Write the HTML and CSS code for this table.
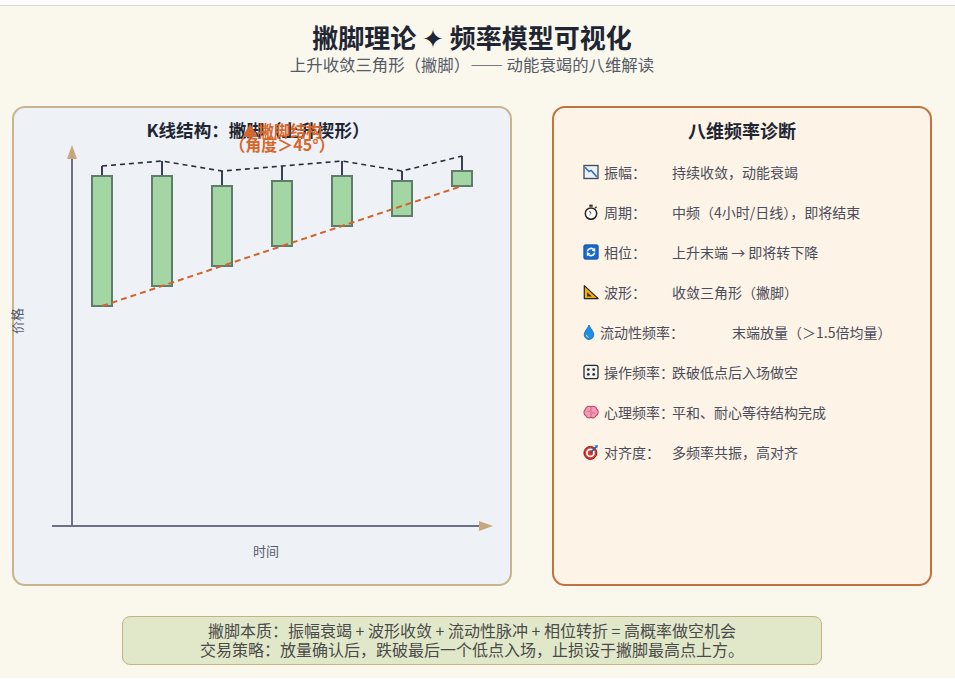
FILE: index.html
```html
<!DOCTYPE html>
<html lang="zh-CN">
<head>
<meta charset="utf-8">
<title>撇脚理论 ✦ 频率模型可视化</title>
<link rel="stylesheet" href="styles.css">
</head>
<body>
<div class="page">
  <header class="header">
    <h1 class="title">撇脚理论 ✦ 频率模型可视化</h1>
    <p class="subtitle">上升收敛三角形（撇脚）—— 动能衰竭的八维解读</p>
  </header>

  <main class="panels">
    <section class="panel panel--chart">
      <svg class="chart" width="496" height="476" viewBox="0 0 496 476">
        <!-- axes -->
        <line class="axis" x1="58" y1="418" x2="58" y2="50"/>
        <polygon class="arrow" points="58,37 53,51 63,51"/>
        <line class="axis" x1="38" y1="418" x2="466" y2="418"/>
        <polygon class="arrow" points="479,418 465,413 465,423"/>

        <!-- wicks -->
        <line class="wick" x1="88" y1="58" x2="88" y2="68"/>
        <line class="wick" x1="148" y1="53" x2="148" y2="68"/>
        <line class="wick" x1="208" y1="63" x2="208" y2="78"/>
        <line class="wick" x1="268" y1="58" x2="268" y2="73"/>
        <line class="wick" x1="328" y1="53" x2="328" y2="68"/>
        <line class="wick" x1="388" y1="63" x2="388" y2="73"/>
        <line class="wick" x1="448" y1="48" x2="448" y2="63"/>

        <!-- bodies -->
        <rect class="body" x="78" y="68" width="20" height="130"/>
        <rect class="body" x="138" y="68" width="20" height="110"/>
        <rect class="body" x="198" y="78" width="20" height="80"/>
        <rect class="body" x="258" y="73" width="20" height="65"/>
        <rect class="body" x="318" y="68" width="20" height="50"/>
        <rect class="body" x="378" y="73" width="20" height="35"/>
        <rect class="body" x="438" y="63" width="20" height="15"/>

        <!-- trend lines -->
        <polyline class="trend-top" points="88,58 148,53 208,63 268,58 328,53 388,63 448,48"/>
        <line class="trend-bottom" x1="88" y1="198" x2="448" y2="78"/>

        <!-- texts -->
        <text class="chart-title" x="244" y="29">K线结构：撇脚（上升楔形）</text>
        <text class="chart-note" x="268" y="29">▲撇脚结构</text>
        <text class="chart-note" x="268" y="43">（角度＞45°）</text>
        <text class="axis-label" x="252" y="448">时间</text>
        <text class="axis-label" x="0" y="0" transform="translate(8 213) rotate(-90)">价格</text>
      </svg>
    </section>

    <section class="panel panel--diag">
      <h2 class="diag-title">八维频率诊断</h2>
      <ul class="diag-list">
        <li class="diag-row">
          <span class="diag-label">
            <svg class="ico" viewBox="0 0 16 16"><rect x="1" y="1.5" width="14" height="13" fill="#e9f1fa" stroke="#3f4a58" stroke-width="1.3"/><polyline points="2,3.2 6,7.5 8.2,6.4 14,13" fill="none" stroke="#2f6fc0" stroke-width="1.6"/></svg>振幅：</span>
          <span class="diag-value">持续收敛，动能衰竭</span>
        </li>
        <li class="diag-row">
          <span class="diag-label">
            <svg class="ico" viewBox="0 0 16 16"><rect x="6.3" y="0.6" width="3.4" height="2.2" fill="#333"/><line x1="12" y1="4.3" x2="13.6" y2="2.8" stroke="#333" stroke-width="1.4"/><circle cx="8" cy="9.6" r="5.7" fill="#fff" stroke="#222" stroke-width="1.5"/><line x1="8" y1="9.6" x2="6.5" y2="7" stroke="#444" stroke-width="1.1"/><line x1="8" y1="9.6" x2="6.4" y2="11.6" stroke="#999" stroke-width="0.9"/></svg>周期：</span>
          <span class="diag-value">中频（4小时/日线），即将结束</span>
        </li>
        <li class="diag-row">
          <span class="diag-label">
            <svg class="ico" viewBox="0 0 16 16"><rect x="0.8" y="0.8" width="14.4" height="14.4" rx="1.5" fill="#1769cc" stroke="#0c4a94" stroke-width="0.8"/><path d="M4.4 7.4 A3.6 3.6 0 0 1 10.9 5.9" fill="none" stroke="#fff" stroke-width="1.6"/><polygon points="12.2,3.8 12.2,7.8 8.7,6.7" fill="#fff"/><path d="M11.6 8.6 A3.6 3.6 0 0 1 5.1 10.1" fill="none" stroke="#fff" stroke-width="1.6"/><polygon points="3.8,12.2 3.8,8.2 7.3,9.3" fill="#fff"/></svg>相位：</span>
          <span class="diag-value">上升末端 → 即将转下降</span>
        </li>
        <li class="diag-row">
          <span class="diag-label">
            <svg class="ico" viewBox="0 0 16 16"><polygon points="1.3,1.6 15.2,14.6 1.3,14.6" fill="#f2ae0c" stroke="#222" stroke-width="1.2" stroke-linejoin="round"/><polygon points="4.2,8.3 8.9,12.6 4.2,12.6" fill="#3a2e18"/></svg>波形：</span>
          <span class="diag-value">收敛三角形（撇脚）</span>
        </li>
        <li class="diag-row diag-row--wide">
          <span class="diag-label">
            <svg class="ico ico--narrow" viewBox="0 0 12 16"><path d="M6 1 C7.6 4.8 10.8 7.5 10.8 10.7 A4.8 4.8 0 0 1 1.2 10.7 C1.2 7.5 4.4 4.8 6 1 Z" fill="#1b8ee6" stroke="#0c5a9c" stroke-width="0.7"/><path d="M3.4 10.8 A2.6 2.6 0 0 0 5.6 13.4" fill="none" stroke="#c4e6ff" stroke-width="1"/></svg>流动性频率：</span>
          <span class="diag-value">末端放量（＞1.5倍均量）</span>
        </li>
        <li class="diag-row">
          <span class="diag-label">
            <svg class="ico" viewBox="0 0 16 16"><rect x="1" y="1.3" width="14" height="13.4" rx="2" fill="#f2f2f2" stroke="#2a2a2a" stroke-width="1.3"/><circle cx="5.3" cy="5.6" r="1.4" fill="#333"/><circle cx="10.7" cy="5.6" r="1.4" fill="#333"/><circle cx="5.3" cy="10.4" r="1.4" fill="#333"/><circle cx="10.7" cy="10.4" r="1.4" fill="#333"/></svg>操作频率：</span>
          <span class="diag-value">跌破低点后入场做空</span>
        </li>
        <li class="diag-row">
          <span class="diag-label">
            <svg class="ico" viewBox="0 0 16 16"><path d="M3 11.8 C0.3 10.8 0.4 6.4 2.5 5.3 C2.9 2.6 6 1.6 8 2.8 C10 1.6 13.5 2.4 13.7 5.1 C15.9 6.3 15.7 10.8 13 11.6 C12.4 13.9 9.5 14.5 8 13.3 C6.5 14.5 3.6 13.9 3 11.8 Z" fill="#f39bb2" stroke="#b9476c" stroke-width="1.1"/><path d="M8 3.4 V12.8 M4.3 7 C5.4 8 6.5 7.5 7 7 M9 9.2 C10 8.3 11.6 8.6 12.1 9.6" fill="none" stroke="#cc5f83" stroke-width="0.9"/></svg>心理频率：</span>
          <span class="diag-value">平和、耐心等待结构完成</span>
        </li>
        <li class="diag-row">
          <span class="diag-label">
            <svg class="ico" viewBox="0 0 16 16"><circle cx="7.4" cy="8.9" r="6.5" fill="#e3352a" stroke="#6e150f" stroke-width="0.9"/><circle cx="7.4" cy="8.9" r="4.4" fill="#fff"/><circle cx="7.4" cy="8.9" r="2.6" fill="#e3352a"/><line x1="7.4" y1="8.9" x2="13" y2="3" stroke="#1c5aa8" stroke-width="1.6"/><polygon points="11.4,1.6 15,0.9 14.3,4.6 12.7,3.4" fill="#2d80d8"/></svg>对齐度：</span>
          <span class="diag-value">多频率共振，高对齐</span>
        </li>
      </ul>
    </section>
  </main>

  <footer class="summary">
    <p class="summary-line">撇脚本质：振幅衰竭 + 波形收敛 + 流动性脉冲 + 相位转折 = 高概率做空机会</p>
    <p class="summary-line">交易策略：放量确认后，跌破最后一个低点入场，止损设于撇脚最高点上方。</p>
  </footer>
</div>
</body>
</html>
```

FILE: styles.css
```css
html, body {
  margin: 0;
  padding: 0;
  background: #ffffff;
}

body {
  font-family: "Noto Sans CJK SC", "Noto Sans", "DejaVu Sans", sans-serif;
  color: #4a4d5c;
}

.page {
  box-sizing: border-box;
  width: 955px;
  min-height: 673px;
  margin-top: 5px;
  padding: 14px 23px 0 12px;
  border-top: 1px solid #dcdcd8;
  background: #faf7ed;
}

.header {
  width: 920px;
  text-align: center;
}

.title {
  margin: 0;
  font-size: 26px;
  line-height: 34px;
  font-weight: 700;
  color: #1f2633;
}

.subtitle {
  margin: 0;
  font-size: 16.4px;
  line-height: 21px;
  color: #555a66;
}

.panels {
  display: flex;
  gap: 40px;
  margin-top: 31px;
  width: 920px;
}

.panel {
  box-sizing: border-box;
  height: 480px;
  border-radius: 13px;
}

.panel--chart {
  width: 500px;
  background: #eef2f6;
  border: 2px solid #c9b48f;
}

.chart {
  display: block;
  overflow: visible;
}

.axis {
  stroke: #6e7185;
  stroke-width: 2;
}

.arrow {
  fill: #c7a77c;
}

.wick {
  stroke: #394150;
  stroke-width: 2;
}

.body {
  fill: #a4d6a3;
  stroke: #5f7c6d;
  stroke-width: 2;
}

.trend-top {
  fill: none;
  stroke: #2a2f3d;
  stroke-width: 1.6;
  stroke-dasharray: 5 4;
}

.trend-bottom {
  stroke: #d2632b;
  stroke-width: 2;
  stroke-dasharray: 6 4;
}

.chart-title {
  font-family: "Noto Sans CJK SC", "Noto Sans", sans-serif;
  font-size: 17.6px;
  font-weight: 700;
  fill: #1f2633;
  text-anchor: middle;
}

.chart-note {
  font-family: "Noto Sans CJK SC", "Noto Sans", sans-serif;
  font-size: 16px;
  font-weight: 700;
  fill: #d7662a;
  text-anchor: middle;
}

.axis-label {
  font-family: "Noto Sans CJK SC", "Noto Sans", sans-serif;
  font-size: 13px;
  fill: #555a6a;
  text-anchor: middle;
}

.panel--diag {
  width: 380px;
  background: #fdf3e6;
  border: 2px solid #c2723f;
  padding: 10px 0 0 29px;
}

.diag-title {
  margin: 0 0 10px 0;
  padding-right: 29px;
  text-align: center;
  font-size: 18px;
  line-height: 24px;
  font-weight: 700;
  color: #1f2633;
}

.diag-list {
  list-style: none;
  margin: 0;
  padding: 0;
}

.diag-row {
  display: grid;
  grid-template-columns: 89px auto;
  align-items: center;
  height: 40px;
  font-size: 14px;
  color: #4a4d5c;
}

.diag-label {
  display: flex;
  align-items: center;
  gap: 5px;
  white-space: nowrap;
}

.ico {
  width: 16px;
  height: 16px;
  flex: none;
}

.ico--narrow {
  width: 12px;
}

.diag-value {
  white-space: nowrap;
}

.diag-row--wide .diag-value {
  padding-left: 60px;
}

.summary {
  box-sizing: border-box;
  width: 700px;
  margin: 30px 0 0 110px;
  padding: 4px 0 5px;
  background: #e1e8c9;
  border: 1px solid #c8b27f;
  border-radius: 8px;
  text-align: center;
}

.summary-line {
  margin: 0;
  font-size: 16px;
  line-height: 19px;
  color: #4a4a4a;
}
```
